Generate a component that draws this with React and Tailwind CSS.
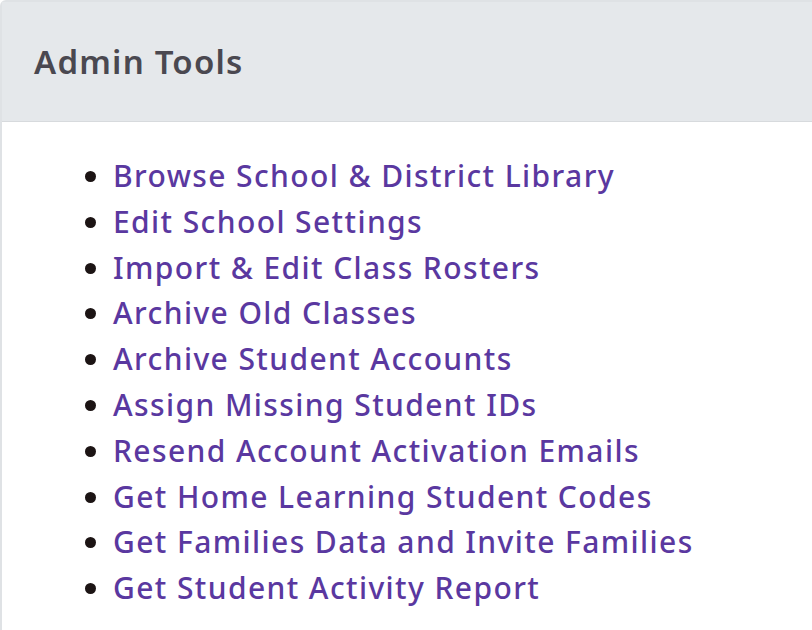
export default function App() {
  const items = [
    "Browse School & District Library",
    "Edit School Settings",
    "Import & Edit Class Rosters",
    "Archive Old Classes",
    "Archive Student Accounts",
    "Assign Missing Student IDs",
    "Resend Account Activation Emails",
    "Get Home Learning Student Codes",
    "Get Families Data and Invite Families",
    "Get Student Activity Report",
  ];
  return (
    <div className="w-[812px] h-[630px] overflow-hidden bg-white" style={{ fontFamily: '"Noto Sans", sans-serif' }}>
      <div className="w-[830px] h-[660px] border-2 border-[#dfe2e5] rounded-tl-md">
        <div className="h-[120px] bg-[#e5e8eb] border-b border-[#d7dadd] flex items-center pl-[32px]">
          <h2 className="text-[33px] font-semibold text-[#4a4850] tracking-[1.2px]">Admin Tools</h2>
        </div>
        <ul className="list-disc pl-[111px] pt-[31px] text-[#1c1414] marker:text-[#1c1414]">
          {items.map((t) => (
            <li key={t} className="h-[45.8px] leading-[45.8px] text-[30px] tracking-[1.4px]">
              <a className="text-[#5a38a0] font-medium">{t}</a>
            </li>
          ))}
        </ul>
      </div>
    </div>
  );
}
